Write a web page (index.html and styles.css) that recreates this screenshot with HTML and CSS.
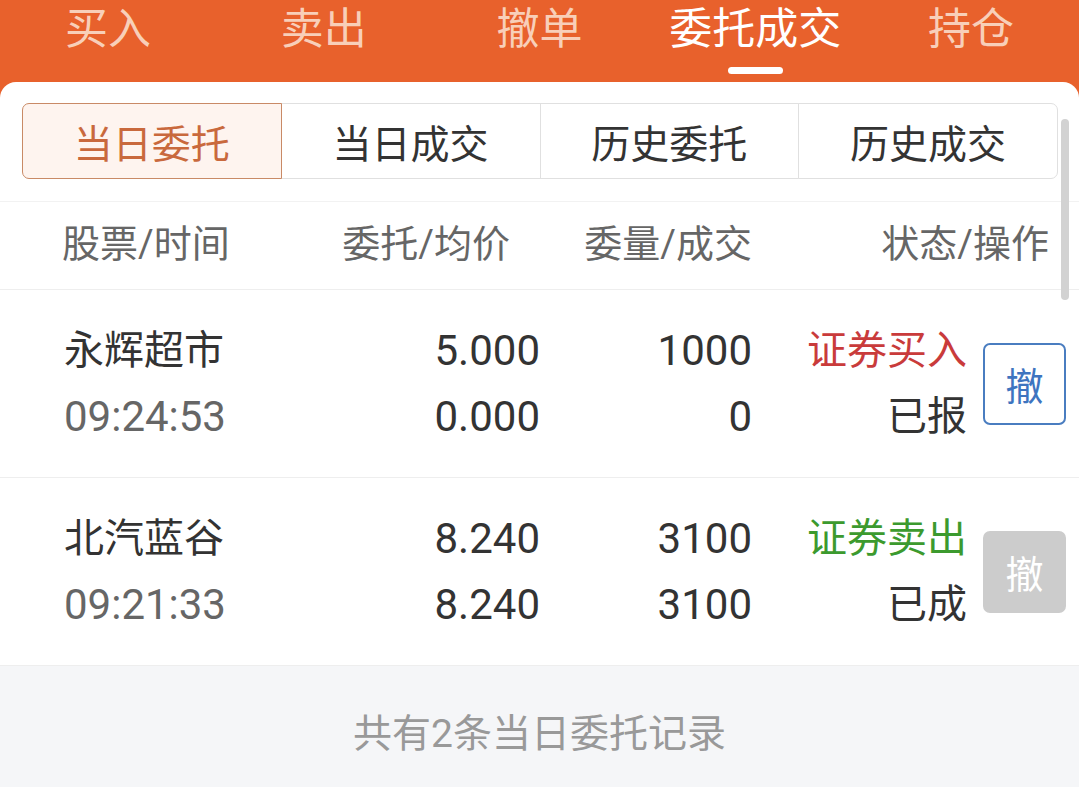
FILE: index.html
```html
<!DOCTYPE html>
<html lang="zh-CN">
<head>
<meta charset="utf-8">
<title>委托成交</title>
<link rel="stylesheet" href="styles.css">
</head>
<body>
<div class="app">
  <nav class="topbar">
    <div class="tab"><span class="tab-label">买入</span></div>
    <div class="tab"><span class="tab-label">卖出</span></div>
    <div class="tab"><span class="tab-label">撤单</span></div>
    <div class="tab tab-active"><span class="tab-label">委托成交</span><span class="tab-indicator"></span></div>
    <div class="tab"><span class="tab-label">持仓</span></div>
  </nav>
  <main class="panel">
    <div class="scrollbar"></div>
    <div class="segments">
      <div class="seg seg-active">当日委托</div>
      <div class="seg">当日成交</div>
      <div class="seg">历史委托</div>
      <div class="seg">历史成交</div>
    </div>
    <div class="thead">
      <div class="th th-left">股票/时间</div>
      <div class="th">委托/均价</div>
      <div class="th">委量/成交</div>
      <div class="th">状态/操作</div>
    </div>
    <div class="row">
      <div class="cell cell-left"><div class="name">永辉超市</div><div class="time">09:24:53</div></div>
      <div class="cell num"><div>5.000</div><div>0.000</div></div>
      <div class="cell num"><div>1000</div><div>0</div></div>
      <div class="cell"><div class="buy">证券买入</div><div>已报</div></div>
      <button class="cancel">撤</button>
    </div>
    <div class="row">
      <div class="cell cell-left"><div class="name">北汽蓝谷</div><div class="time">09:21:33</div></div>
      <div class="cell num"><div>8.240</div><div>8.240</div></div>
      <div class="cell num"><div>3100</div><div>3100</div></div>
      <div class="cell"><div class="sell">证券卖出</div><div>已成</div></div>
      <button class="cancel cancel-disabled">撤</button>
    </div>
    <div class="footer">共有2条当日委托记录</div>
  </main>
</div>
</body>
</html>
```

FILE: styles.css
```css
* { box-sizing: border-box; }
html, body {
  margin: 0;
  padding: 0;
  background: #E8612C;
}
body {
  font-family: Roboto, "Noto Sans CJK SC", sans-serif;
  width: 1079px;
  height: 787px;
  overflow: hidden;
}
.app {
  display: flex;
  flex-direction: column;
  height: 787px;
}
.topbar {
  display: flex;
  height: 82px;
  background: #E8612C;
}
.tab {
  flex: 1;
  display: flex;
  flex-direction: column;
  align-items: center;
}
.tab-label {
  font-size: 43px;
  line-height: 58px;
  color: #F8CFB9;
}
.tab-active .tab-label { color: #FFFFFF; }
.tab-indicator {
  margin-top: 9px;
  width: 55px;
  height: 7px;
  border-radius: 4px;
  background: #FFFFFF;
}
.panel {
  position: relative;
  flex: 1;
  display: flex;
  flex-direction: column;
  background: #FFFFFF;
  border-radius: 16px 16px 0 0;
}
.scrollbar {
  position: absolute;
  right: 10px;
  top: 37px;
  width: 8px;
  height: 181px;
  border-radius: 4px;
  background: #D2D2D2;
}
.segments {
  display: flex;
  margin: 21px 21px 0 22px;
  height: 76px;
}
.seg {
  flex: 1;
  display: flex;
  align-items: center;
  justify-content: center;
  font-size: 39px;
  color: #333333;
  border: 1px solid #E0E0E0;
  margin-left: -1px;
  background: #FFFFFF;
}
.seg:first-child { margin-left: 0; border-radius: 7px 0 0 7px; }
.seg:last-child { border-radius: 0 7px 7px 0; }
.seg-active {
  position: relative;
  z-index: 1;
  color: #C9693D;
  background: #FEF4EF;
  border-color: #C98A66;
}
.thead {
  display: grid;
  grid-template-columns: 218px 230px 242px 1fr;
  align-items: center;
  height: 89px;
  margin-top: 22px;
  padding: 0 30px 0 62px;
  border-top: 1px solid #F2F2F2;
  border-bottom: 1px solid #EEEEEE;
}
.th {
  font-size: 38px;
  line-height: 44px;
  color: #666666;
  text-align: right;
  padding-bottom: 4px;
}
.th-left { text-align: left; }
.row {
  display: grid;
  grid-template-columns: 236px 240px 212px 215px 99px;
  align-items: center;
  height: 188px;
  padding: 0 13px 0 64px;
  border-bottom: 1px solid #EEEEEE;
}
.row:last-of-type { border-bottom: none; }
.cell {
  font-size: 40px;
  line-height: 66px;
  color: #333333;
  text-align: right;
}
.num { font-size: 42px; }
.cell-left { text-align: left; }
.time { color: #666666; font-size: 42px; }
.buy { color: #C93B3B; }
.sell { color: #3C9A2E; }
.cancel {
  justify-self: end;
  width: 83px;
  height: 82px;
  padding: 0;
  font-family: "Noto Sans CJK SC", sans-serif;
  font-size: 38px;
  color: #3E74BF;
  background: #FFFFFF;
  border: 2px solid #4A7DC0;
  border-radius: 7px;
}
.cancel-disabled {
  color: #FFFFFF;
  background: #CCCCCC;
  border-color: #CCCCCC;
}
.footer {
  flex: 1;
  background: #F5F6F8;
  text-align: center;
  font-size: 39px;
  line-height: 48px;
  padding-top: 44px;
  color: #999999;
}
```
